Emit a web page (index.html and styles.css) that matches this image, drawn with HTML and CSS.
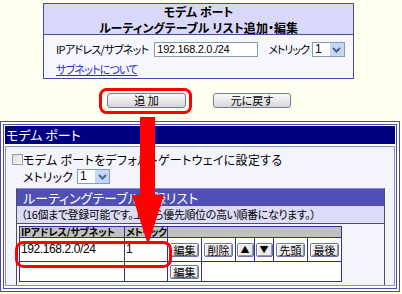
FILE: index.html
```html
<!DOCTYPE html>
<html lang="ja">
<head>
<meta charset="utf-8">
<link rel="stylesheet" href="styles.css">
</head>
<body>
<div class="page">
  <div class="topbox">
    <div class="topbox-head">
      <div>モデム ポート</div>
      <div>ルーティングテーブル リスト追加・編集</div>
    </div>
    <div class="topbox-body">
      <div class="form-row">
        <span class="lbl">IPアドレス/サブネット</span>
        <span class="input">192.168.2.0./24</span>
        <span class="lbl lbl-metric">メトリック</span>
        <span class="select"><span class="sel-val">1</span><span class="sel-btn"><svg width="9" height="6" viewBox="0 0 9 6"><path d="M1 1 L4.5 4.5 L8 1" fill="none" stroke="#4d6185" stroke-width="2"/></svg></span></span>
      </div>
      <a class="link" href="#">サブネットについて</a>
    </div>
  </div>

  <div class="btn-row">
    <button class="xp-btn btn-add">追 加</button>
    <button class="xp-btn btn-back">元に戻す</button>
  </div>

  <div class="panel">
    <div class="panel-title">モデム ポート</div>
    <div class="panel-body">
      <div class="check-row"><span class="checkbox"></span>モデム ポートをデフォルトゲートウェイに設定する</div>
      <div class="metric-row">
        <span class="metric-lbl">メトリック</span>
        <span class="select"><span class="sel-val">1</span><span class="sel-btn"><svg width="9" height="6" viewBox="0 0 9 6"><path d="M1 1 L4.5 4.5 L8 1" fill="none" stroke="#4d6185" stroke-width="2"/></svg></span></span>
      </div>
      <div class="inner">
        <div class="inner-title">ルーティングテーブル登録リスト</div>
        <div class="inner-note">（16個まで登録可能です。上から優先順位の高い順番になります。）</div>
        <div class="rt">
          <div class="cell hd"><div class="hd-txt">IPアドレス/サブネット</div></div>
          <div class="cell hd"><div class="hd-txt hd-met">メトリック</div></div>
          <div class="cell hd span6"></div>

          <div class="cell r1 txt">192.168.2.0/24</div>
          <div class="cell r1 txt">1</div>
          <div class="cell r1 bc"><span class="cbtn">編集</span></div>
          <div class="cell r1 bc"><span class="cbtn">削除</span></div>
          <div class="cell r1 bc"><span class="cbtn sq">▲</span></div>
          <div class="cell r1 bc"><span class="cbtn sq">▼</span></div>
          <div class="cell r1 bc"><span class="cbtn">先頭</span></div>
          <div class="cell r1 bc"><span class="cbtn">最後</span></div>

          <div class="cell"></div>
          <div class="cell"></div>
          <div class="cell bc"><span class="cbtn">編集</span></div>
          <div class="cell span5"></div>
        </div>
      </div>
    </div>
  </div>

  <svg class="overlay" width="402" height="294" viewBox="0 0 402 294">
    <rect x="100.5" y="89.5" width="90" height="23" rx="6" ry="6" fill="none" stroke="#ff0000" stroke-width="3"/>
    <rect x="140" y="117" width="15" height="80" fill="#ff0000"/>
    <polygon points="132,195 164,195 148,245" fill="#ff0000"/>
    <rect x="16.5" y="242.5" width="154" height="24" rx="7" ry="7" fill="none" stroke="#ff0000" stroke-width="3"/>
  </svg>
</div>
</body>
</html>
```
FILE: styles.css
```css
html, body {
  margin: 0;
  padding: 0;
  background: #fffff0;
}
body {
  font-family: "Noto Sans CJK JP", "Noto Sans", sans-serif;
  font-feature-settings: "palt";
  color: #000;
  width: 402px;
  height: 294px;
  overflow: hidden;
}
.page {
  position: relative;
  width: 402px;
  height: 294px;
  padding-top: 3px;
  box-sizing: border-box;
}
.topbox {
  margin-left: 43px;
  width: 309px;
  border: 1px solid #4848a8;
}
.topbox-head {
  background: #d8d8f8;
  height: 31px;
  border-bottom: 1px solid #4848a8;
  text-align: center;
  font-size: 12px;
  font-weight: bold;
  line-height: 16px;
  padding-top: 0;
  box-sizing: border-box;
}
.topbox-body {
  background: #f6f6fe;
  height: 43px;
  padding: 7px 0 0 12px;
  box-sizing: border-box;
}
.form-row {
  display: flex;
  align-items: center;
  height: 15px;
}
.lbl {
  font-size: 11px;
  line-height: 15px;
  white-space: nowrap;
  letter-spacing: -0.7px;
  margin-right: 6px;
}
.lbl-metric {
  letter-spacing: -1px;
  margin-right: 3px;
}
.input {
  flex: none;
  width: 104px;
  height: 15px;
  box-sizing: border-box;
  border: 1px solid #7f9db9;
  background: #fff;
  font-family: "Liberation Sans", sans-serif;
  font-size: 11px;
  line-height: 13px;
  padding-left: 2px;
  margin-right: 10px;
  letter-spacing: -0.3px;
}
.select {
  flex: none;
  display: inline-flex;
  width: 33px;
  height: 15px;
  box-sizing: border-box;
  border: 1px solid #7f9db9;
  background: #fff;
}
.sel-val {
  flex: 1;
  font-family: "Liberation Sans", sans-serif;
  font-size: 12px;
  line-height: 13px;
  padding-left: 2px;
}
.sel-btn {
  width: 14px;
  height: 13px;
  background: #c6d6fa;
  display: flex;
  align-items: center;
  justify-content: center;
}
.link {
  display: block;
  margin-top: 6px;
  font-size: 11px;
  line-height: 12px;
  color: #2a2ad8;
  text-decoration: underline;
  width: max-content;
  letter-spacing: -0.8px;
}
.btn-row {
  display: flex;
  margin-top: 14px;
  padding-left: 107px;
  gap: 27px;
  height: 15px;
}
.xp-btn {
  height: 15px;
  box-sizing: border-box;
  border: 1px solid #6f7f95;
  border-radius: 3px;
  background: linear-gradient(#fafafa, #e6e6e6 60%, #d6d6d6);
  font-family: "Noto Sans CJK JP", sans-serif;
  font-feature-settings: "palt";
  font-size: 11px;
  line-height: 13px;
  padding: 0;
  color: #000;
}
.btn-add { width: 79px; }
.btn-back { width: 78px; }
.panel {
  margin-top: 13px;
  width: 400px;
  height: 171px;
  box-sizing: border-box;
  border: 4px double #4a4ab0;
  padding: 1px 1px 0 1px;
}
.panel-title {
  background: #000080;
  color: #fff;
  font-size: 13px;
  line-height: 18px;
  height: 18px;
  padding-left: 1px;
}
.panel-body {
  margin-top: 2px;
  border: 1px solid #8c8cd0;
  background: #f4f4fc;
  height: 140px;
  box-sizing: border-box;
  padding: 6px 0 0 6px;
  overflow: hidden;
}
.check-row {
  display: flex;
  align-items: center;
  font-size: 12px;
  line-height: 13px;
  letter-spacing: 0.3px;
  white-space: nowrap;
}
.checkbox {
  width: 11px;
  height: 11px;
  box-sizing: border-box;
  border: 1px solid #8c9cb8;
  background: linear-gradient(135deg, #dcdcd4, #fbfbf8);
}
.metric-row {
  display: flex;
  align-items: center;
  margin-top: 3px;
  margin-left: 11px;
  height: 15px;
}
.metric-lbl {
  font-size: 12px;
  width: 54px;
  line-height: 15px;
}
.inner {
  margin-top: 4px;
  margin-left: 4px;
  width: 369px;
  height: 98px;
  box-sizing: border-box;
  border: 1px solid #505058;
  border-top-color: #8c8cd0;
  background: #f4f4fc;
}
.inner-title {
  background: #5050b4;
  color: #fff;
  font-size: 13px;
  line-height: 17px;
  height: 17px;
  padding-left: 6px;
}
.inner-note {
  background: #dcdcf8;
  border-bottom: 1px solid #505058;
  font-size: 11px;
  line-height: 17px;
  height: 17px;
  padding-left: 4px;
  letter-spacing: -0.4px;
  white-space: nowrap;
}
.rt {
  margin: 2px 0 0 2px;
  width: 323px;
  box-sizing: border-box;
  display: grid;
  grid-template-columns: 105px 43px 34px 34px 19px 19px 34px 34px;
  grid-template-rows: 11px 24px 20px;
  border-left: 1px solid #303090;
  border-top: 1px solid #303090;
  background: #fff;
}
.cell {
  box-sizing: border-box;
  border-right: 1px solid #303090;
  border-bottom: 1px solid #303090;
  min-width: 0;
  overflow: hidden;
}
.span6 { grid-column: span 6; }
.span5 { grid-column: span 5; }
.hd {
  background: #c0c0c0;
}
.hd-txt {
  font-size: 10px;
  font-weight: bold;
  line-height: 10px;
  padding-left: 1px;
  white-space: nowrap;
  letter-spacing: -0.2px;
}
.hd-met {
  letter-spacing: -0.6px;
}
.txt {
  font-family: "Liberation Sans", sans-serif;
  font-size: 12px;
  line-height: 23px;
  padding-left: 1px;
  letter-spacing: -0.4px;
}
.bc {
  display: flex;
  align-items: center;
  justify-content: center;
}
.cbtn {
  display: inline-block;
  width: 29px;
  height: 14px;
  box-sizing: border-box;
  border: 1px solid #6878a0;
  border-radius: 2px;
  background: #ececec;
  box-shadow: inset 1px 1px #fff, inset -1px -1px #9a9a9a;
  font-size: 11px;
  line-height: 12px;
  text-align: center;
  flex: none;
}
.cbtn.sq {
  width: 17px;
  font-size: 9px;
}
.overlay {
  position: absolute;
  left: 0;
  top: 0;
  pointer-events: none;
}
```
